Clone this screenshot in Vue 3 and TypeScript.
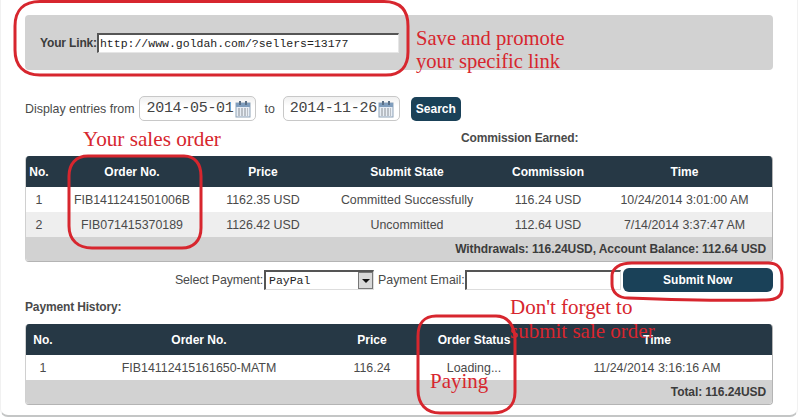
<script setup lang="ts">
interface Column {
  label: string
  width: number
}

const salesColumns: Column[] = [
  { label: 'No.', width: 26 },
  { label: 'Order No.', width: 160 },
  { label: 'Price', width: 102 },
  { label: 'Submit State', width: 186 },
  { label: 'Commission', width: 96 },
  { label: 'Time', width: 177 },
]

const salesRows = [
  ['1', 'FIB1411241501006B', '1162.35 USD', 'Committed Successfully', '116.24 USD', '10/24/2014 3:01:00 AM'],
  ['2', 'FIB071415370189', '1126.42 USD', 'Uncommitted', '112.64 USD', '7/14/2014 3:37:47 AM'],
]

const historyColumns: Column[] = [
  { label: 'No.', width: 34 },
  { label: 'Order No.', width: 278 },
  { label: 'Price', width: 68 },
  { label: 'Order Status', width: 136 },
  { label: 'Time', width: 230 },
]

const historyRows = [
  ['1', 'FIB14112415161650-MATM', '116.24', 'Loading...', '11/24/2014 3:16:16 AM'],
]

const dates = ['2014-05-01', '2014-11-26']
</script>

<template>
  <div class="page">
    <div class="link-panel">
      <label class="link-label">Your Link:</label>
      <input class="link-input" value="http://www.goldah.com/?sellers=13177" readonly />
    </div>

    <div class="filter-row">
      <span>Display entries from</span>
      <div class="date-box">
        <span class="date-text">{{ dates[0] }}</span>
        <svg class="cal" width="16" height="18" viewBox="0 0 16 18">
          <rect x="1" y="3" width="14" height="14" fill="#e8eef5" stroke="#8fa3b8" />
          <rect x="1" y="3" width="14" height="4" fill="#7f9dbd" />
          <rect x="4" y="1" width="2" height="4" fill="#5a6f86" />
          <rect x="10" y="1" width="2" height="4" fill="#5a6f86" />
          <path d="M3 9h10M3 11h10M3 13h10M3 15h10" stroke="#8a8f96" stroke-dasharray="2 1" />
        </svg>
      </div>
      <span class="to">to</span>
      <div class="date-box">
        <span class="date-text">{{ dates[1] }}</span>
        <svg class="cal" width="16" height="18" viewBox="0 0 16 18">
          <rect x="1" y="3" width="14" height="14" fill="#e8eef5" stroke="#8fa3b8" />
          <rect x="1" y="3" width="14" height="4" fill="#7f9dbd" />
          <rect x="4" y="1" width="2" height="4" fill="#5a6f86" />
          <rect x="10" y="1" width="2" height="4" fill="#5a6f86" />
          <path d="M3 9h10M3 11h10M3 13h10M3 15h10" stroke="#8a8f96" stroke-dasharray="2 1" />
        </svg>
      </div>
      <button class="search-btn">Search</button>
    </div>

    <div class="earned">Commission Earned:</div>

    <div class="data-table">
      <table>
        <colgroup>
          <col v-for="col in salesColumns" :key="col.label" :style="{ width: col.width + 'px' }" />
        </colgroup>
        <thead>
          <tr>
            <th v-for="col in salesColumns" :key="col.label">{{ col.label }}</th>
          </tr>
        </thead>
        <tbody>
          <tr v-for="row in salesRows" :key="row[0]">
            <td v-for="(cell, i) in row" :key="i">{{ cell }}</td>
          </tr>
        </tbody>
      </table>
      <div class="table-foot">Withdrawals: 116.24USD, Account Balance: 112.64 USD</div>
    </div>

    <div class="payment-row">
      <span class="select-label">Select Payment:</span>
      <div class="select-box">
        <span>PayPal</span>
        <i class="select-arrow"></i>
      </div>
      <span class="email-label">Payment Email:</span>
      <input class="email-input" readonly />
      <button class="submit-btn">Submit Now</button>
    </div>

    <div class="history-title">Payment History:</div>

    <div class="data-table history">
      <table>
        <colgroup>
          <col v-for="col in historyColumns" :key="col.label" :style="{ width: col.width + 'px' }" />
        </colgroup>
        <thead>
          <tr>
            <th v-for="col in historyColumns" :key="col.label">{{ col.label }}</th>
          </tr>
        </thead>
        <tbody>
          <tr v-for="row in historyRows" :key="row[0]">
            <td v-for="(cell, i) in row" :key="i">{{ cell }}</td>
          </tr>
        </tbody>
      </table>
      <div class="table-foot">Total: 116.24USD</div>
    </div>

    <!-- red hand annotations painted over the page -->
    <svg class="marks" width="799" height="418" viewBox="0 0 799 418" fill="none">
      <path d="M40 1.5H384C400 1.5 408 10 408 26V52C408 67 400 75 386 75H40C24 75 15 66 15 50V26C15 10 24 1.5 40 1.5Z" />
      <path d="M88 156H184C195 156 201 164 201 176V228C201 241 193 248 182 248H92C78 248 69 240 69 226V176C69 164 76 156 88 156Z" />
      <path d="M632 263H768C778 263 782 268 782 278V288C782 296 776 300 766 300C720 301 680 300 628 298C618 298 612 292 612 284V276C612 268 620 263 632 263Z" />
      <path d="M436 316H496C508 316 515 326 515 340V392C515 406 506 413 492 413H440C426 413 418 404 418 390V336C418 324 424 316 436 316Z" />
    </svg>
    <div class="note note-link">Save and promote<br />your specific link</div>
    <div class="note note-sales">Your sales order</div>
    <div class="note note-submit">Don't forget to<br />submit sale order</div>
    <div class="note note-paying">Paying</div>
  </div>
</template>

<style scoped>
.page {
  position: relative;
  box-sizing: border-box;
  width: 798px;
  height: 417px;
  padding: 15px 0 0 24px;
  border: 1px solid #f1f1f1;
  border-top: none;
  border-bottom: 2px solid #c4c6c6;
  border-radius: 0 0 8px 8px;
  background: #fff;
  font-family: "Liberation Sans", Arial, sans-serif;
  font-size: 12.4px;
  color: #4a4a4a;
}
.link-panel {
  display: flex;
  align-items: center;
  box-sizing: border-box;
  width: 748px;
  height: 55px;
  margin-bottom: -1px;
  padding-left: 15px;
  background: #d2d2d2;
  border-radius: 4px;
}
.link-label {
  font-weight: bold;
  font-size: 12px;
  letter-spacing: -0.15px;
  color: #3c3c3c;
}
.link-input {
  box-sizing: border-box;
  width: 302px;
  height: 20px;
  padding: 0 1px;
  border-width: 2px 1px 1px 2px;
  border-style: solid;
  border-color: #555 #e6e6e6 #e6e6e6 #555;
  font-family: "Liberation Mono", monospace;
  font-size: 11.5px;
  color: #222;
  outline: none;
}
.filter-row {
  display: flex;
  align-items: center;
  height: 27px;
  margin-top: 26px;
}
.date-box {
  box-sizing: border-box;
  display: flex;
  align-items: center;
  width: 117px;
  height: 25px;
  margin-left: 5px;
  padding-left: 6px;
  border: 1px solid #c8c8c8;
  border-radius: 5px;
  background: linear-gradient(#f0f0f0, #fff 40%);
}
.date-text {
  font-family: "Liberation Mono", monospace;
  font-size: 15px;
  letter-spacing: -0.3px;
  color: #444;
}
.cal {
  margin-left: 1px;
}
.to {
  margin-left: 8px;
  margin-right: 3px;
}
.search-btn {
  width: 50px;
  height: 24px;
  margin-left: 11px;
  padding: 0;
  border: none;
  border-radius: 5px;
  background: #1a4158;
  color: #fff;
  font: bold 12px "Liberation Sans", Arial, sans-serif;
}
.earned {
  height: 14px;
  margin-top: 9px;
  margin-left: 436px;
  font-size: 12px;
  letter-spacing: -0.15px;
  font-weight: bold;
  line-height: 14px;
}
.data-table {
  box-sizing: border-box;
  width: 748px;
  margin-top: 11px;
  border-right: 1px solid #b4b4b4;
  border-bottom: 1px solid #b4b4b4;
  border-left: 1px solid #d0d0d0;
  border-radius: 4px;
  overflow: hidden;
}
.history {
  margin-top: 10px;
}
table {
  width: 100%;
  border-collapse: collapse;
  table-layout: fixed;
}
th {
  height: 31px;
  padding: 0;
  background: #263845;
  color: #fff;
  font-weight: bold;
  font-size: 12px;
}
td {
  height: 25px;
  padding: 0;
  text-align: center;
  white-space: nowrap;
}
tbody tr:nth-child(even) td {
  background: #eee;
}
.table-foot {
  height: 24px;
  padding-right: 6px;
  background: #d2d2d2;
  text-align: right;
  font-size: 12px;
  letter-spacing: -0.08px;
  font-weight: bold;
  line-height: 25px;
  color: #3c3c3c;
}
.payment-row {
  display: flex;
  align-items: center;
  height: 24px;
  margin-top: 6px;
  padding-left: 150px;
}
.select-label {
  letter-spacing: -0.15px;
}
.select-box {
  box-sizing: border-box;
  display: flex;
  align-items: center;
  justify-content: space-between;
  width: 110px;
  height: 20px;
  margin-left: 1px;
  padding-left: 3px;
  border-width: 2px 1px 1px 2px;
  border-style: solid;
  border-color: #555 #ddd #ddd #555;
  font-family: "Liberation Mono", monospace;
  font-size: 11.5px;
  color: #222;
}
.select-arrow {
  position: relative;
  box-sizing: border-box;
  width: 15px;
  height: 17px;
  background: #d8d8d8;
  border: 1px solid #777;
}
.select-arrow::after {
  content: "";
  position: absolute;
  left: 3px;
  top: 6px;
  border: 4px solid transparent;
  border-top: 4px solid #111;
  border-bottom: none;
}
.email-label {
  margin-left: 4px;
}
.email-input {
  box-sizing: border-box;
  width: 156px;
  height: 20px;
  border-width: 2px 1px 1px 2px;
  border-style: solid;
  border-color: #555 #ddd #ddd #555;
  outline: none;
}
.submit-btn {
  width: 150px;
  height: 24px;
  margin-left: 2px;
  padding: 0;
  border: none;
  border-radius: 6px;
  background: #1a4158;
  color: #fff;
  font: bold 12px "Liberation Sans", Arial, sans-serif;
}
.history-title {
  height: 14px;
  margin-top: 8px;
  font-size: 12px;
  letter-spacing: -0.15px;
  font-weight: bold;
  line-height: 14px;
}
.marks {
  position: absolute;
  left: -1px;
  top: 0;
  pointer-events: none;
}
.marks path {
  stroke: #d7262e;
  stroke-width: 3;
}
.note {
  position: absolute;
  font-family: "Liberation Serif", "Times New Roman", serif;
  font-size: 21px;
  line-height: 24px;
  color: #d7262e;
  white-space: nowrap;
}
.note-link {
  left: 415px;
  top: 27px;
  font-size: 20.6px;
  line-height: 23px;
}
.note-sales {
  left: 82px;
  top: 127px;
  font-size: 21.2px;
}
.note-submit {
  left: 509px;
  top: 295px;
}
.note-paying {
  left: 429px;
  top: 369px;
}
</style>
